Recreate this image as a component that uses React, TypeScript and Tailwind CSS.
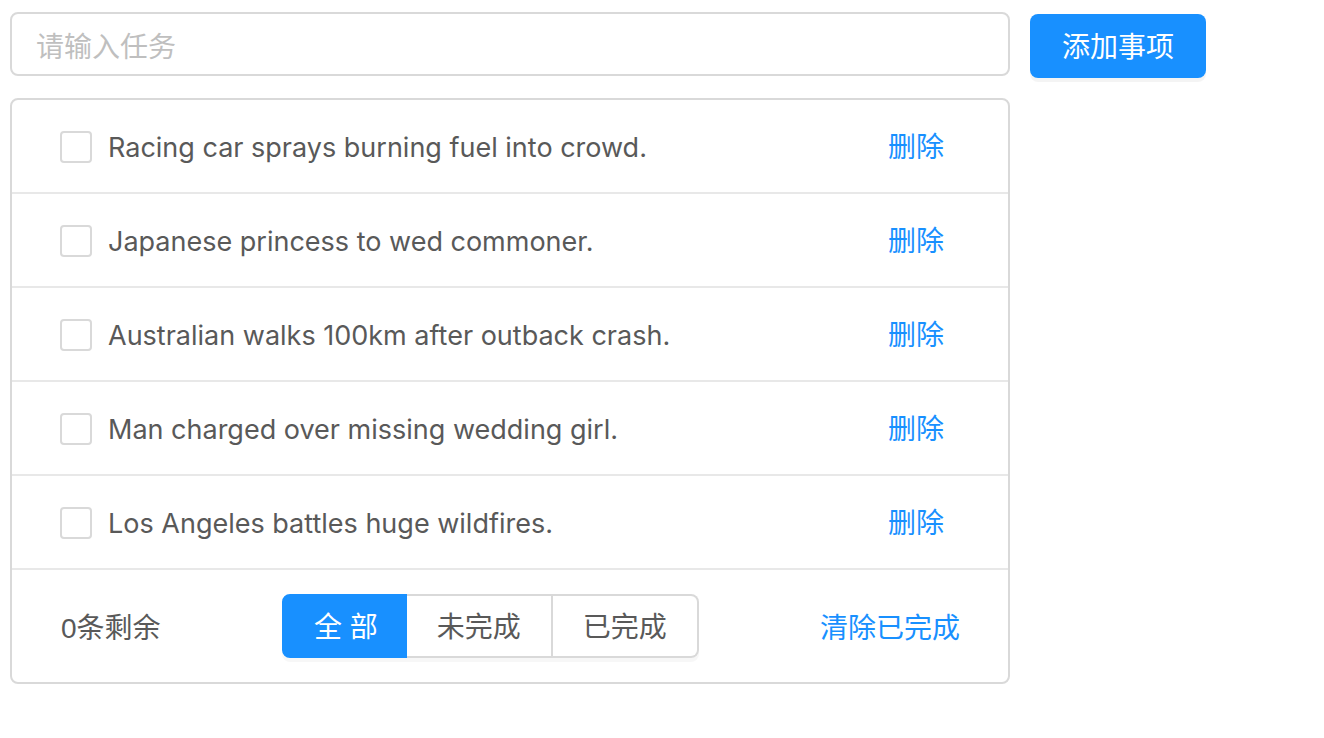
import React from 'react';

const todos = [
  'Racing car sprays burning fuel into crowd.',
  'Japanese princess to wed commoner.',
  'Australian walks 100km after outback crash.',
  'Man charged over missing wedding girl.',
  'Los Angeles battles huge wildfires.',
];

const font = { fontFamily: '"Liberation Sans", "Noto Sans CJK SC", sans-serif' };
const latin = { fontFamily: 'Inter, "Noto Sans CJK SC", sans-serif' };

export default function App() {
  return (
    <div className="bg-white min-h-screen pt-[12px] pl-[10px] text-[28px] leading-[44px] text-[#595959]" style={font}>
      {/* header */}
      <div className="flex items-start">
        <input
          className="w-[1000px] h-[64px] border-2 border-[#d9d9d9] rounded-[8px] px-[24px] pt-[8px] outline-none placeholder:text-[#bfbfbf] text-[28px]"
          placeholder="请输入任务"
        />
        <button className="ml-[20px] mt-[2px] w-[176px] h-[64px] pt-[3px] rounded-[8px] bg-[#1890ff] text-white text-[28px] shadow-[0_4px_0_rgba(0,0,0,0.045)]">
          添加事项
        </button>
      </div>

      {/* list */}
      <div className="mt-[20px] w-[1000px] border-2 border-[#d9d9d9] rounded-[8px]">
        {todos.map((t, i) => (
          <div key={i} className="flex items-center justify-between py-[22px] px-[48px] border-b-2 border-[#e8e8e8]">
            <div className="flex items-center">
              <span className="w-[32px] h-[32px] mt-[2px] border-2 border-[#d9d9d9] rounded-[4px] bg-white" />
              <span className="ml-[16px] pt-[4px] text-[27px]" style={latin}>{t}</span>
            </div>
            <span className="text-[#1890ff] mr-[16px] pt-[4px]">删除</span>
          </div>
        ))}

        {/* footer */}
        <div className="flex items-center justify-between py-[24px] px-[48px]">
          <span className="ml-[1px] pt-[6px]">0条剩余</span>
          <div className="flex h-[64px] shadow-[0_4px_0_rgba(0,0,0,0.03)] rounded-[8px]">
            <div className="flex items-center pl-[30px] pr-[27px] pt-[4px] bg-[#1890ff] text-white border-2 border-[#1890ff] rounded-l-[8px]">全 部</div>
            <div className="flex items-center px-[30px] pt-[4px] border-y-2 border-r-2 border-[#d9d9d9]">未完成</div>
            <div className="flex items-center px-[30px] pt-[4px] border-y-2 border-r-2 border-[#d9d9d9] rounded-r-[8px]">已完成</div>
          </div>
          <span className="text-[#1890ff] pt-[6px]">清除已完成</span>
        </div>
      </div>
    </div>
  );
}
